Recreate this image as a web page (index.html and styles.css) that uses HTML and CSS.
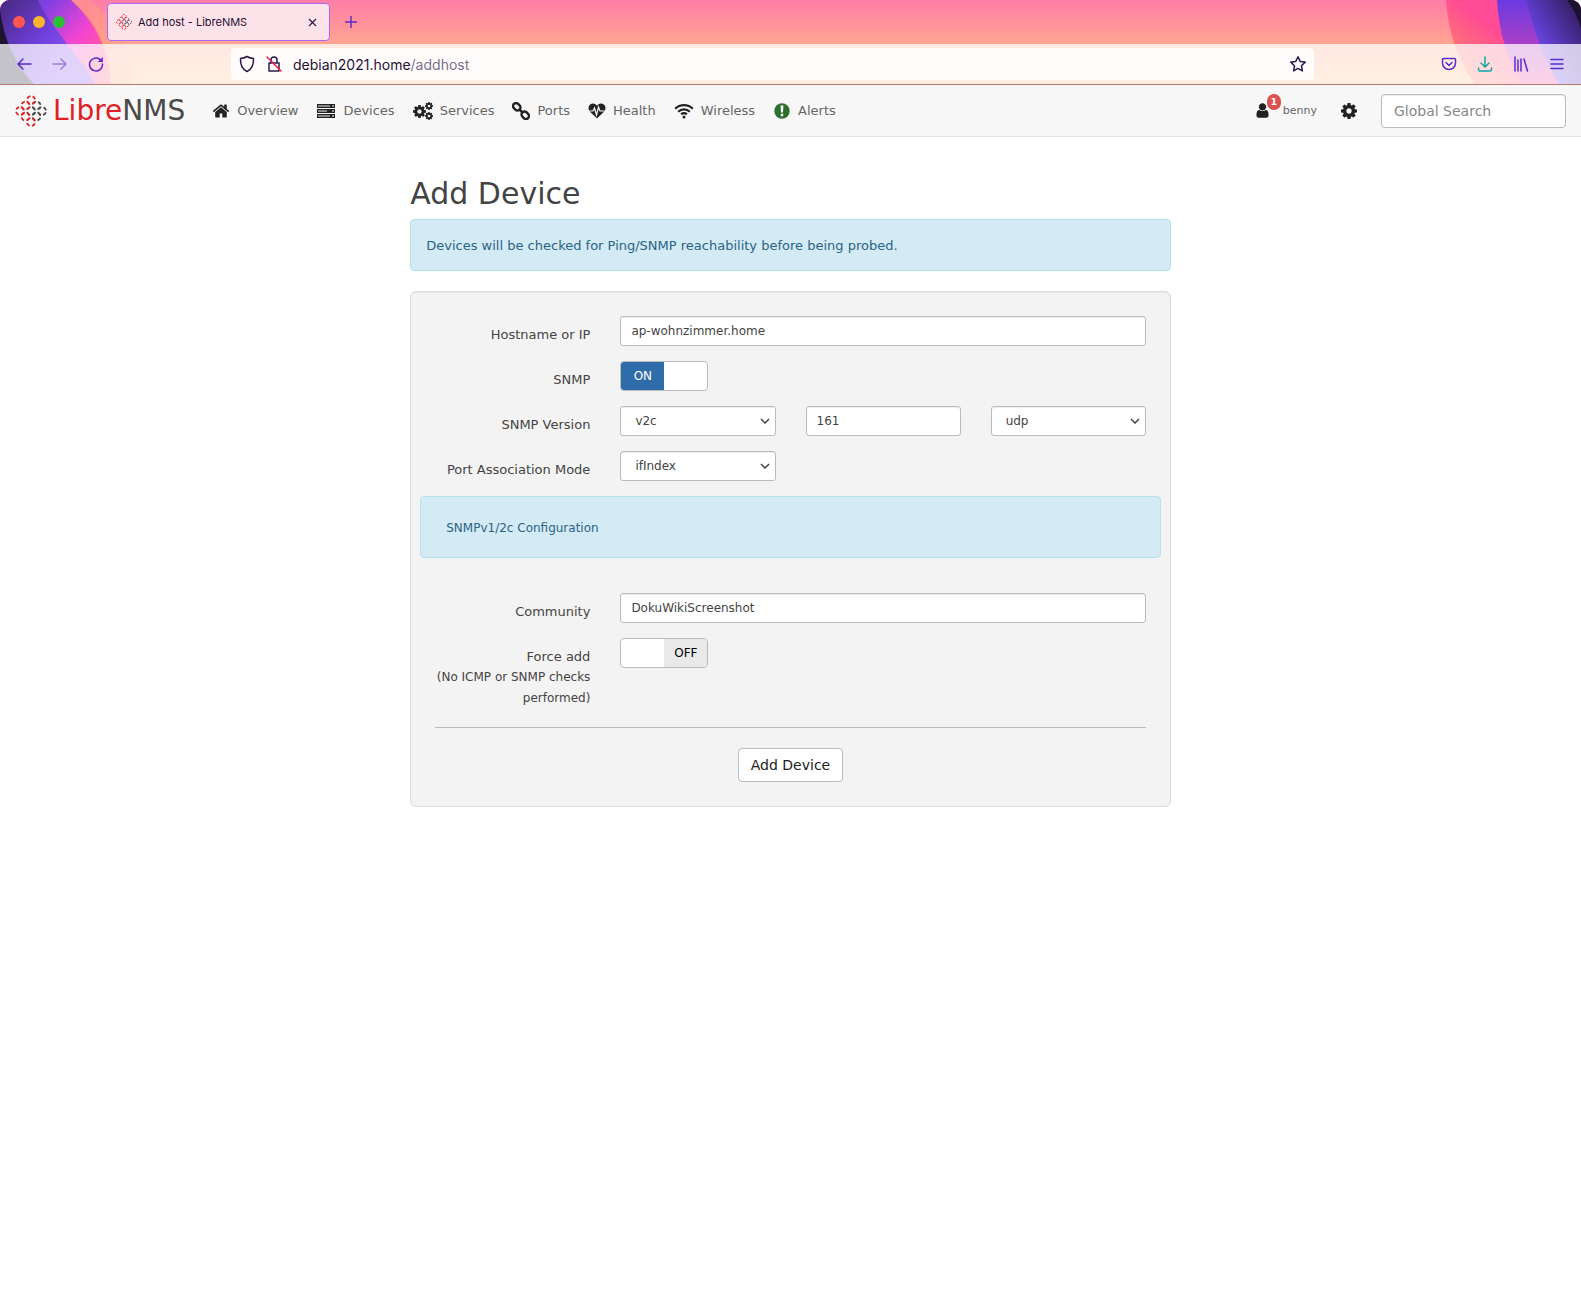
FILE: index.html
```
<!DOCTYPE html>
<html lang="en">
<head>
  <meta charset="UTF-8">
  <meta name="viewport" content="width=device-width, initial-scale=1.0">
  <title>Add host - LibreNMS</title>
  <link rel="stylesheet" href="styles.css">
</head>
<body>

<!-- icons used more than once -->
<svg class="sprite" aria-hidden="true">
  <symbol id="logo" viewBox="0 0 32 32">
    <g fill="none" stroke-width="1.8" stroke-dasharray="3.9 2.383" stroke-dashoffset="-1.19">
      <g stroke="#4a4a4a">
        <circle cx="21.500" cy="10.500" r="4"/>
        <circle cx="16" cy="16" r="4"/>
        <circle cx="27" cy="16" r="4"/>
        <circle cx="21.500" cy="21.500" r="4"/>
      </g>
      <g stroke="#e02027">
        <circle cx="16" cy="5" r="4"/>
        <circle cx="10.500" cy="10.500" r="4"/>
        <circle cx="5" cy="16" r="4"/>
        <circle cx="10.500" cy="21.500" r="4"/>
        <circle cx="16" cy="27" r="4"/>
      </g>
    </g>
  </symbol>
  <symbol id="cog" viewBox="0 -128 1536 1536">
    <path d="M1024 640q0-106-75-181t-181-75-181 75-75 181 75 181 181 75 181-75 75-181zm512-109v222q0 12-8 23t-20 13l-185 28q-19 54-39 91 35 50 107 138 10 12 10 25t-9 23q-27 37-99 108t-94 71q-12 0-26-9l-138-108q-44 23-91 38-16 136-29 186-7 28-36 28h-222q-14 0-24-8t-12-22l-28-184q-49-16-90-37l-141 107q-10 9-25 9-14 0-25-11-126-114-165-168-7-10-7-23 0-12 8-23 15-21 51-66t54-71q-27-50-41-99l-183-27q-13-2-21-12t-8-24v-222q0-12 8-23t19-13l186-28q14-46 39-92-40-57-107-138-10-12-10-24 0-10 9-23 26-36 98-107t95-72q13 0 26 10l138 107q44-23 91-38 16-136 29-186 7-28 36-28h222q14 0 24 8t12 22l28 184q49 16 90 37l142-107q9-9 24-9 13 0 25 10 129 119 165 170 7 8 7 22 0 12-8 23-15 21-51 66t-54 71q26 50 41 98l183 28q13 2 21 12t8 24z"/>
  </symbol>
</svg>

<header class="browser">
  <svg class="theme theme-left" viewBox="0 0 140 85" aria-hidden="true">
    <defs>
      <linearGradient id="violet" x1="0" y1="0" x2="0.800" y2="0.600">
        <stop offset="0" stop-color="#46287c"/>
        <stop offset="0.600" stop-color="#6f3fdc"/>
        <stop offset="1" stop-color="#8a50f0"/>
      </linearGradient>
      <linearGradient id="magenta" x1="0.200" y1="0" x2="1" y2="0.600">
        <stop offset="0.200" stop-color="#7b3fe4"/>
        <stop offset="0.700" stop-color="#f545d0"/>
        <stop offset="1" stop-color="#ff5a9a"/>
      </linearGradient>
    </defs>
    <path d="M0 0H90C115 18 131 50 134 85H0z" fill="#ff9a80" opacity="0.500"/>
    <path d="M0 0H71C96 20 109 50 111 85H0z" fill="#ff6a8a"/>
    <path d="M0 0H71C88 16 102 36 106 60L97 85H0z" fill="url(#magenta)"/>
    <path d="M0 0H38C50 28 80 55 96 85H0z" fill="url(#violet)"/>
    <path d="M0 10C4 40 15 65 35 85H0z" fill="#1e1430"/>
  </svg>
  <svg class="theme theme-right" viewBox="0 0 140 85" aria-hidden="true">
    <defs>
      <linearGradient id="pink" x1="0" y1="0.700" x2="0.500" y2="0.300">
        <stop offset="0" stop-color="#ff8068"/>
        <stop offset="0.800" stop-color="#ff4a96"/>
      </linearGradient>
      <linearGradient id="purple" x1="0" y1="0" x2="0" y2="1">
        <stop offset="0" stop-color="#6a3ae0"/>
        <stop offset="0.500" stop-color="#a83fc8"/>
        <stop offset="1" stop-color="#f050a0"/>
      </linearGradient>
      <linearGradient id="indigo" x1="0" y1="1" x2="1" y2="0">
        <stop offset="0.300" stop-color="#7048f0"/>
        <stop offset="1" stop-color="#2c1850"/>
      </linearGradient>
    </defs>
    <path d="M5 0C7 32 17 60 34 85H140V0z" fill="url(#pink)"/>
    <path d="M56 0C58 32 66 60 82 85H140V0z" fill="url(#purple)"/>
    <path d="M85 0C92 30 104 60 118 85H140V0z" fill="url(#indigo)"/>
    <path d="M126 0C132 8 137 18 140 28V0z" fill="#1c1230"/>
  </svg>

  <div class="tab-bar">
    <div class="lights">
      <span class="light light-close"></span>
      <span class="light light-minimize"></span>
      <span class="light light-zoom"></span>
    </div>
    <div class="tab">
      <svg width="16" height="16"><use href="#logo"/></svg>
      <span class="tab-title">Add host - LibreNMS</span>
      <button class="chrome-button" type="button" aria-label="Close tab">
        <svg width="9" height="9" viewBox="0 0 9 9" fill="none" stroke="#2b1a4a" stroke-width="1.200"><path d="M1 1l7 7M8 1L1 8"/></svg>
      </button>
    </div>
    <button class="chrome-button" type="button" aria-label="New tab">
      <svg width="12" height="12" viewBox="0 0 12 12" fill="none" stroke="#5b2bc9" stroke-width="1.400"><path d="M6 0v12M0 6h12"/></svg>
    </button>
  </div>

  <div class="toolbar">
    <div class="toolbar-nav">
      <button class="chrome-button" type="button" aria-label="Back">
        <svg width="16" height="16" viewBox="0 0 16 16"><path d="M15 8H2M7 3L2 8l5 5"/></svg>
      </button>
      <button class="chrome-button" type="button" aria-label="Forward" disabled>
        <svg width="16" height="16" viewBox="0 0 16 16"><path d="M1 8h13M9 3l5 5-5 5"/></svg>
      </button>
      <button class="chrome-button" type="button" aria-label="Reload">
        <svg width="16" height="16" viewBox="0 0 16 16"><path d="M13.800 5.500A6.500 6.500 0 1 0 14.500 8"/><path d="M14.800 1v5h-5z" fill="#5b2bc9" stroke="none"/></svg>
      </button>
    </div>
    <div class="url-bar">
      <svg width="16" height="18" viewBox="0 0 16 18"><path d="M8 1.500c2 1.300 4 1.900 6.500 2 .3 6-1.500 10.500-6.500 13C3 14 1.200 9.500 1.500 3.500 4 3.400 6 2.800 8 1.500z"/></svg>
      <svg width="16" height="18" viewBox="0 0 16 18"><path d="M5 8V5a3 3 0 0 1 6 0V8M3 8h10v8H3z"/><path d="M1 2l14 14" stroke="#e8204e"/></svg>
      <span class="url"><span class="url-host">debian2021.home</span>/addhost</span>
      <svg width="18" height="18" viewBox="0 0 18 18"><path d="M9 1.700l2.200 4.700 5 .7-3.700 3.600.9 5.200L9 13.400l-4.400 2.500.9-5.200L1.800 7.100l5-.7z"/></svg>
    </div>
    <div class="toolbar-actions">
      <button class="chrome-button" type="button" aria-label="Pocket">
        <svg width="16" height="16" viewBox="0 0 16 16"><path d="M2.500 2.500h11a1 1 0 0 1 1 1V7a6.500 6.500 0 0 1-13 0V3.500a1 1 0 0 1 1-1zM5 6.500l3 3 3-3"/></svg>
      </button>
      <button class="chrome-button downloads" type="button" aria-label="Downloads">
        <svg width="16" height="16" viewBox="0 0 16 16"><path d="M8 1v10M4 7l4 4 4-4M1.500 12v1.500a1.500 1.500 0 0 0 1.500 1.500h10a1.500 1.500 0 0 0 1.500-1.500V12"/></svg>
      </button>
      <button class="chrome-button" type="button" aria-label="Library">
        <svg width="16" height="16" viewBox="0 0 16 16"><path d="M2 1v14M5 4v11M8 3v12M11 3l3.500 12"/></svg>
      </button>
      <button class="chrome-button" type="button" aria-label="Menu">
        <svg width="16" height="16" viewBox="0 0 16 16"><path d="M2 3.500h12M2 8h12M2 12.500h12"/></svg>
      </button>
    </div>
  </div>
</header>

<nav class="navbar">
  <a class="brand" href="#">
    <svg width="32" height="32"><use href="#logo"/></svg>
    <span class="brand-text"><span class="brand-red">Libre</span>NMS</span>
  </a>
  <div class="nav-links">
    <a href="#"><svg width="18" height="18" viewBox="0 0 1792 1792"><path d="M1472 992v480q0 26-19 45t-45 19h-384v-384h-256v384h-384q-26 0-45-19t-19-45v-480l1-6 575-474 575 474q1 2 1 6zm223-69l-62 74q-8 9-21 11h-3q-13 0-21-7l-692-577-692 577q-12 8-24 7-13-2-21-11l-62-74q-8-10-7-23t11-22l719-599q32-26 76-26t76 26l244 204v-195q0-14 9-23t23-9h192q14 0 23 9t9 23v408l219 182q10 8 11 22t-7 23z"/></svg>Overview</a>
    <a href="#"><svg width="20" height="18" viewBox="0 0 20 18"><path d="M1 2h18v4H1zM1 7h18v4H1zM1 12h18v4H1z"/><path d="M2 4h12M2 9h9M2 14h12" stroke="#aaa" stroke-width="1.600"/><path d="M16 4h2M16 9h2M16 14h2" stroke="#fff"/></svg>Devices</a>
    <a href="#"><svg width="20" height="18" viewBox="0 0 20 18"><use href="#cog" x="0" y="3" width="13" height="13"/><use href="#cog" x="12" y="0" width="8" height="8"/><use href="#cog" x="12" y="10" width="8" height="8"/></svg>Services</a>
    <a href="#"><svg width="18" height="18" viewBox="0 0 18 18"><g fill="none" stroke="#222" stroke-width="2.400" transform="rotate(45 9 9)"><rect x="-1" y="6" width="8" height="6" rx="3"/><rect x="11" y="6" width="8" height="6" rx="3"/><path d="M6 9h6"/></g></svg>Ports</a>
    <a href="#"><svg width="18" height="18" viewBox="0 0 18 18"><path d="M9 16.500L1.500 9.200C-.5 6.500.5 1.500 4.800 1.500 7 1.500 8.300 2.800 9 4c.7-1.200 2-2.500 4.200-2.500 4.300 0 5.300 5 3.300 7.700z"/><path d="M0 9h5l1.500-3 2 7 2-8 1.500 4h6" fill="none" stroke="#f8f8f8" stroke-width="1.200"/></svg>Health</a>
    <a href="#"><svg width="20" height="18" viewBox="0 0 20 18"><path d="M1.200 6.800a12.500 12.500 0 0 1 17.600 0M4.200 9.700a8.300 8.300 0 0 1 11.600 0M7.200 12.400a4 4 0 0 1 5.600 0" fill="none" stroke="#222" stroke-width="2.300"/><circle cx="10" cy="15" r="1.500"/></svg>Wireless</a>
    <a href="#"><svg width="18" height="18" viewBox="0 0 18 18"><circle cx="9" cy="9" r="7.700" fill="#2d6f2d"/><path d="M7.600 3.500h2.800L10 10.500H8zM7.800 11.800h2.400v2.400H7.800z" fill="#fff"/></svg>Alerts</a>
  </div>
  <div class="nav-right">
    <a class="user" href="#">
      <svg width="17" height="17" viewBox="0 0 1792 1792"><path d="M1536 1399q0 109-62 187t-151 78h-854q-88 0-150-78t-63-187q0-85 8-160t32-152 58-131 94-89 135-35q131 128 313 128t313-128q76 0 134 34t94 89 59 131 31 152 9 161zm-256-887q0 159-112 271t-272 113-271-113-113-271 113-271 271-113 271 113 113 271z"/></svg>
      <span class="badge">1</span>
      benny
    </a>
    <a href="#" aria-label="Settings"><svg width="16" height="16"><use href="#cog"/></svg></a>
    <input class="search" type="search" placeholder="Global Search" aria-label="Global Search">
  </div>
</nav>

<main class="content">
  <h1>Add Device</h1>
  <div class="alert">Devices will be checked for Ping/SNMP reachability before being probed.</div>

  <form class="well">
    <div class="form-row">
      <label for="hostname">Hostname or IP</label>
      <input class="wide" type="text" id="hostname" name="hostname" value="ap-wohnzimmer.home">
    </div>
    <div class="form-row">
      <label for="snmp">SNMP</label>
      <span class="switch">
        <input type="checkbox" id="snmp" name="snmp" checked>
        <span class="switch-on">ON</span>
        <span class="switch-off">OFF</span>
      </span>
    </div>
    <div class="form-row">
      <label for="snmpver">SNMP Version</label>
      <select id="snmpver" name="snmpver">
        <option>v1</option>
        <option selected>v2c</option>
        <option>v3</option>
      </select>
      <input type="text" name="port" value="161" aria-label="Port">
      <select name="transport" aria-label="Transport">
        <option>udp</option>
        <option>tcp</option>
      </select>
    </div>
    <div class="form-row">
      <label for="assoc">Port Association Mode</label>
      <select id="assoc" name="port_assoc_mode">
        <option>ifIndex</option>
        <option>ifName</option>
      </select>
    </div>

    <div class="alert alert-section">SNMPv1/2c Configuration</div>

    <div class="form-row">
      <label for="community">Community</label>
      <input class="wide" type="text" id="community" name="community" value="DokuWikiScreenshot">
    </div>
    <div class="form-row">
      <label for="force">Force add <small>(No ICMP or SNMP checks performed)</small></label>
      <span class="switch">
        <input type="checkbox" id="force" name="force_add">
        <span class="switch-on">ON</span>
        <span class="switch-off">OFF</span>
      </span>
    </div>

    <hr>
    <button class="submit" type="submit">Add Device</button>
  </form>
</main>

</body>
</html>
```
FILE: styles.css
```
* {
  box-sizing: border-box;
}

body {
  margin: 0;
  background-color: #fff;
  color: #444;
  font-family: Verdana, "DejaVu Sans", sans-serif;
  font-size: 14px;
  line-height: 21px;
}

a {
  color: #666;
  text-decoration: none;
}

svg {
  display: block;
  flex: none;
}

.sprite {
  position: absolute;
  width: 0;
  height: 0;
}

/* browser window */
.browser {
  position: relative;
  overflow: hidden;
  border-bottom: 1px solid #b5786c;
  border-radius: 10px 10px 0 0;
  background: linear-gradient(#ff7da8, #ffa592 44px, #ffc384);
  font-family: Inter, sans-serif;
}

.theme {
  position: absolute;
  top: 0;
  width: 140px;
  height: 85px;
}

.theme-left {
  left: 0;
}

.theme-right {
  right: 0;
}

.chrome-button {
  display: flex;
  padding: 0;
  border: none;
  background: none;
}

.tab-bar {
  position: relative;
  display: flex;
  align-items: center;
  height: 44px;
  padding-left: 13px;
}

.lights {
  display: flex;
  gap: 8px;
  width: 94px;
}

.light {
  width: 12px;
  height: 12px;
  border-radius: 50%;
}

.light-close {
  background-color: #ff5750;
}

.light-minimize {
  background-color: #fdb32d;
}

.light-zoom {
  background-color: #28c131;
}

.tab {
  display: flex;
  align-items: center;
  gap: 6px;
  width: 223px;
  height: 38px;
  margin-right: 15px;
  padding: 0 12px 0 8px;
  border: 1px solid #a668f5;
  border-radius: 4px;
  background-color: #fee2ea;
  color: #1d1133;
  font-size: 11px;
}

.tab-title {
  flex: 1;
}

.toolbar {
  position: relative;
  display: flex;
  align-items: center;
  height: 40px;
  padding: 0 16px;
  background-color: rgba(255, 255, 255, 0.75);
}

.toolbar svg {
  fill: none;
  stroke: #5b2bc9;
  stroke-width: 1.5;
  stroke-linecap: round;
  stroke-linejoin: round;
}

.toolbar-nav {
  display: flex;
  gap: 20px;
  width: 215px;
}

.chrome-button:disabled {
  opacity: 0.5;
}

.url-bar {
  display: flex;
  align-items: center;
  flex: 1;
  gap: 11px;
  height: 32px;
  padding: 0 7px 0 8px;
  border-radius: 4px;
  background-color: rgba(255, 255, 255, 0.85);
}

.url-bar svg {
  stroke: #2b1a4a;
}

.url {
  flex: 1;
  color: #7a708a;
}

.url-host {
  color: #1d1133;
}

.toolbar-actions {
  display: flex;
  justify-content: flex-end;
  gap: 20px;
  width: 251px;
}

.toolbar .downloads svg {
  stroke: #12a5a5;
}

/* site navigation */
.navbar {
  display: flex;
  align-items: center;
  height: 52px;
  padding: 0 15px;
  border-bottom: 1px solid #e0e0e0;
  background-color: #f7f7f7;
}

.navbar svg {
  fill: #222;
}

.brand {
  display: flex;
  align-items: center;
  gap: 6px;
  margin-right: 27px;
  color: #4a4a4a;
  font-size: 28px;
}

.brand-red {
  color: #e02027;
}

.nav-links {
  display: flex;
  gap: 18px;
  font-size: 13px;
}

.nav-links a {
  display: flex;
  align-items: center;
  gap: 7px;
}

.nav-right {
  display: flex;
  align-items: center;
  gap: 24px;
  margin-left: auto;
}

.user {
  position: relative;
  display: flex;
  align-items: center;
  gap: 12px;
  font-size: 11px;
}

.badge {
  position: absolute;
  top: -6px;
  left: 13px;
  width: 14px;
  border-radius: 7px;
  background-color: #d9534f;
  color: #fff;
  font-size: 9px;
  font-weight: bold;
  line-height: 16px;
  text-align: center;
}

input,
select {
  width: 100%;
  height: 30px;
  padding: 0 10px;
  border: 1px solid #bbb;
  border-radius: 3px;
  background-color: #fff;
  box-shadow: inset 0 1px 1px rgba(0, 0, 0, 0.08);
  color: #444;
  font-family: inherit;
  font-size: 12px;
}

.search {
  width: 185px;
  height: 34px;
  padding: 0 12px;
  border-radius: 4px;
  font-size: 14px;
}

.search::placeholder {
  color: #888;
}

/* add device form */
.content {
  width: 50%;
  margin: 0 auto;
  padding: 40px 15px 0;
}

h1 {
  margin: 0 0 8px;
  font-size: 30px;
  font-weight: normal;
  line-height: 34px;
}

.alert {
  margin-bottom: 20px;
  padding: 16px 15px 14px;
  border: 1px solid #b4e3ee;
  border-radius: 4px;
  background-color: #d4eaf5;
  color: #2b6485;
  font-size: 13px;
  line-height: 20px;
}

.alert-section {
  margin: 0 -15px 35px;
  padding: 21px 25px 19px;
  font-size: 12px;
}

.well {
  padding: 24px;
  border: 1px solid #dcdcdc;
  border-radius: 6px;
  background-color: #f3f3f3;
  box-shadow: inset 0 1px 1px rgba(0, 0, 0, 0.05);
}

.form-row {
  display: grid;
  grid-template-columns: repeat(4, 1fr);
  gap: 30px;
  margin-bottom: 15px;
}

.form-row label {
  padding-top: 8px;
  font-size: 13px;
  text-align: right;
}

/* keep one-line labels no taller than their control */
.form-row label:not(:has(small)) {
  height: 30px;
}

small {
  display: block;
  font-size: 12px;
}

.wide {
  grid-column: span 3;
}

select {
  padding: 0 28px 0 14px;
  appearance: none;
  background-image: url("data:image/svg+xml,%3Csvg xmlns='http://www.w3.org/2000/svg' width='10' height='6' fill='none' stroke='%23444' stroke-width='1.5'%3E%3Cpath d='M1 1l4 4 4-4'/%3E%3C/svg%3E");
  background-repeat: no-repeat;
  background-position: right 5px center;
}

.switch {
  position: relative;
  display: flex;
  overflow: hidden;
  width: 88px;
  height: 30px;
  border: 1px solid #bbb;
  border-radius: 4px;
  background-color: #fff;
  font-size: 12px;
  line-height: 28px;
  text-align: center;
}

/* real checkbox lies over the drawn switch */
.switch input {
  position: absolute;
  inset: 0;
  margin: 0;
  opacity: 0;
}

.switch-on,
.switch-off {
  flex: 1;
  visibility: hidden;
}

.switch-on {
  background-color: #2e6da9;
  color: #fff;
}

.switch-off {
  background-color: #e9e9e9;
  color: #000;
}

.switch input:checked ~ .switch-on,
.switch input:not(:checked) ~ .switch-off {
  visibility: visible;
}

hr {
  margin: 18px 0 20px;
  border: none;
  border-top: 1px solid #bbb;
}

.submit {
  display: block;
  height: 34px;
  margin: 0 auto;
  padding: 0 12px;
  border: 1px solid #bbb;
  border-radius: 4px;
  background-color: #fff;
  color: #222;
  font-family: inherit;
  font-size: 14px;
}
```
